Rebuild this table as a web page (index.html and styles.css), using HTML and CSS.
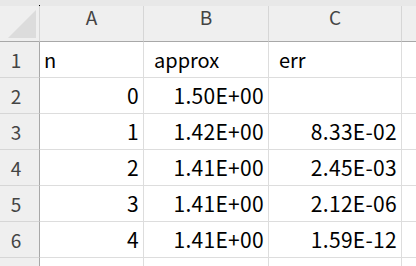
FILE: index.html
```html
<!DOCTYPE html>
<html lang="ja">
<head>
<meta charset="utf-8">
<title>Sheet1</title>
<link rel="stylesheet" href="styles.css">
</head>
<body>
<div class="frame">
  <div class="top-strip"><span class="split-mark"></span></div>
  <div class="sheet">
    <div class="corner"><span class="select-all"></span></div>
    <div class="col-head">A</div>
    <div class="col-head">B</div>
    <div class="col-head">C</div>
    <div class="col-head last"></div>

    <div class="row-head">1</div>
    <div class="cell text first">n</div>
    <div class="cell text">approx</div>
    <div class="cell text">err</div>
    <div class="cell last"></div>

    <div class="row-head">2</div>
    <div class="cell num">0</div>
    <div class="cell num">1.50E+00</div>
    <div class="cell num"></div>
    <div class="cell last"></div>

    <div class="row-head">3</div>
    <div class="cell num">1</div>
    <div class="cell num">1.42E+00</div>
    <div class="cell num">8.33E-02</div>
    <div class="cell last"></div>

    <div class="row-head">4</div>
    <div class="cell num">2</div>
    <div class="cell num">1.41E+00</div>
    <div class="cell num">2.45E-03</div>
    <div class="cell last"></div>

    <div class="row-head">5</div>
    <div class="cell num">3</div>
    <div class="cell num">1.41E+00</div>
    <div class="cell num">2.12E-06</div>
    <div class="cell last"></div>

    <div class="row-head">6</div>
    <div class="cell num">4</div>
    <div class="cell num">1.41E+00</div>
    <div class="cell num">1.59E-12</div>
    <div class="cell last"></div>

    <div class="row-head short"></div>
    <div class="cell short"></div>
    <div class="cell short"></div>
    <div class="cell short"></div>
    <div class="cell short last"></div>
  </div>
</div>
</body>
</html>
```

FILE: styles.css
```css
html, body {
  margin: 0;
  padding: 0;
  background: #ffffff;
  overflow: hidden;
}

body {
  width: 416px;
  height: 266px;
  font-family: "Noto Sans CJK JP", "Noto Sans", sans-serif;
}

.frame {
  display: flex;
  flex-direction: column;
}

.top-strip {
  position: relative;
  height: 6px;
  background: #e8e8e8;
}

/* small pane-split marker above the row header edge */
.split-mark {
  position: absolute;
  left: 39px;
  top: 5px;
  width: 1px;
  height: 1px;
  background: #000000;
}

.sheet {
  display: grid;
  grid-template-columns: 40px 104px 125px 133px 1fr;
  grid-template-rows: repeat(7, 36px) 8px;
}

.sheet > div {
  box-sizing: border-box;
  display: flex;
  align-items: flex-end;
  white-space: nowrap;
}

.sheet > .short {
  border-bottom: none;
}

/* column headers */
.corner,
.col-head {
  background: #efefef;
  border-right: 1px solid #d6d6d6;
  border-bottom: 1px solid #a8a8a8;
}

.corner {
  position: relative;
}

.select-all {
  position: absolute;
  left: 8px;
  top: 4px;
  width: 28px;
  height: 28px;
  background: #dcdcdc;
  clip-path: polygon(100% 0, 100% 100%, 0 100%);
}

.col-head {
  justify-content: center;
  color: #444444;
  font-size: 19px;
  line-height: 1.2;
  padding-bottom: 12px;
}

.col-head.last {
  border-right: none;
}

/* row headers */
.row-head {
  background: #efefef;
  border-right: 1px solid #a8a8a8;
  border-bottom: 1px solid #d6d6d6;
  justify-content: center;
  padding-right: 7px;
  color: #444444;
  font-size: 19px;
  line-height: 1.2;
  padding-bottom: 5px;
}

/* body cells */
.cell {
  border-right: 1px solid #dddddd;
  border-bottom: 1px solid #dddddd;
  color: #000000;
  font-size: 20px;
  line-height: 1.2;
  padding-bottom: 5px;
}

.cell.last {
  border-right: none;
}

.cell.text {
  padding-left: 10px;
}

.cell.text.first {
  padding-left: 4px;
}

.cell.num {
  justify-content: flex-end;
  padding-right: 4px;
  font-size: 21px;
  letter-spacing: 0.3px;
}
```
